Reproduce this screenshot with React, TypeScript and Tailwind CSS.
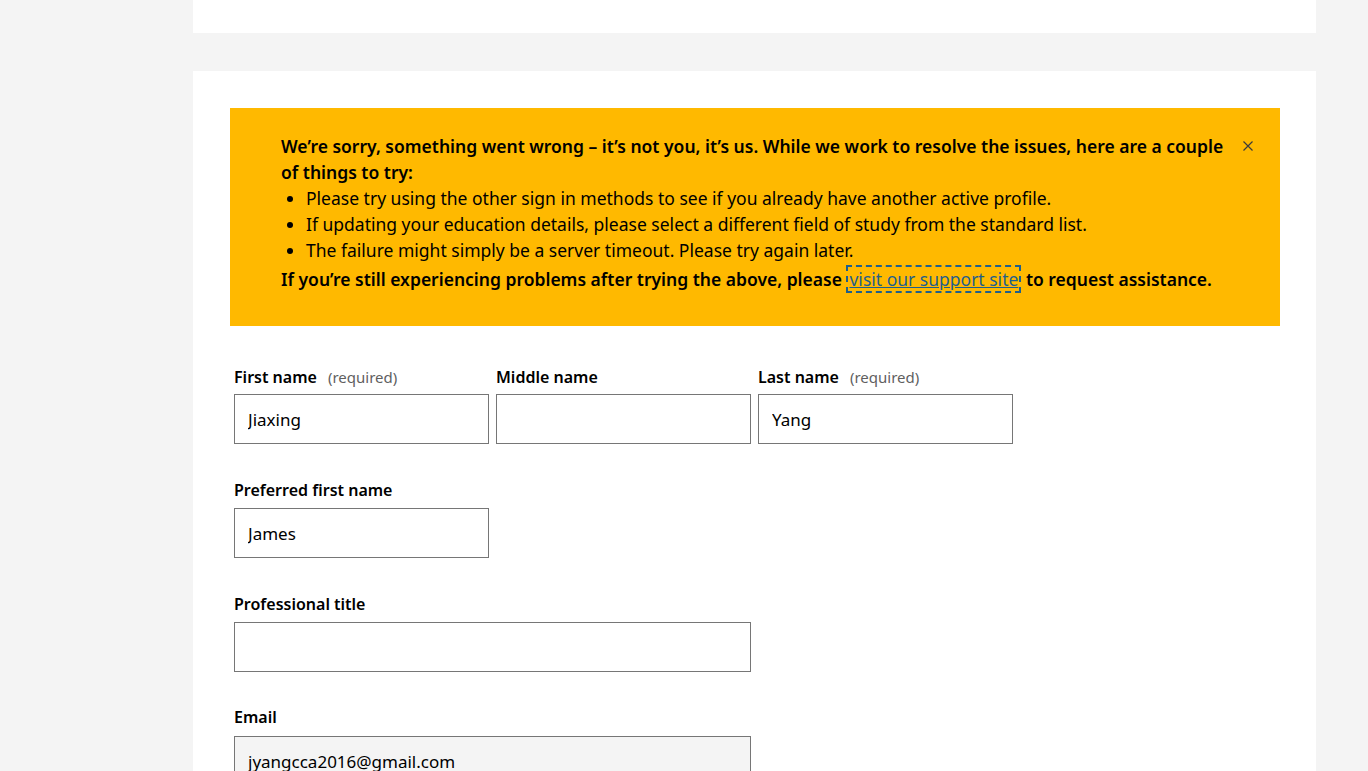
import React from "react"

const font = { fontFamily: '"Noto Sans", "Open Sans", sans-serif' }

const Field = ({
  label,
  required,
  value,
  wide,
  disabled,
  gap = "mb-[6px]",
}: {
  label: string
  required?: boolean
  value?: string
  wide?: boolean
  disabled?: boolean
  gap?: string
}) => (
  <div className={wide ? "w-[517px]" : "w-[255px]"}>
    <label className={`flex items-baseline h-[24px] ${gap} text-[16px] leading-[24px] font-semibold text-black`}>
      {label}
      {required && <span className="ml-[11px] text-[15px] font-normal text-[#5f5f5f]">(required)</span>}
    </label>
    <input
      readOnly
      disabled={disabled}
      defaultValue={value}
      className={`block w-full h-[50px] border border-[#767676] px-[13px] text-[17px] text-black outline-none ${
        disabled ? "bg-[#f4f4f4]" : "bg-white"
      }`}
      style={font}
    />
  </div>
)

export default function App() {
  return (
    <div className="min-h-screen bg-[#f4f4f4]" style={font}>
      <div className="ml-[193px] w-[1123px]">
        <div className="h-[33px] bg-white" />
        <div className="h-[38px]" />
        <div className="bg-white pl-[37px] pr-[36px] pt-[37px] pb-[40px]">
          {/* error banner */}
          <div className="flex bg-[#ffb900] pl-[51px] pr-[26px] pt-[25px] pb-[34px] text-black">
            <div className="flex-1 pr-[14px] text-[17.5px] leading-[26px]">
              <p className="font-semibold">
                We’re sorry, something went wrong – it’s not you, it’s us. While we work to resolve the issues, here are a couple of things to try:
              </p>
              <ul className="list-disc pl-[25px]">
                <li>Please try using the other sign in methods to see if you already have another active profile.</li>
                <li>If updating your education details, please select a different field of study from the standard list.</li>
                <li>The failure might simply be a server timeout. Please try again later.</li>
              </ul>
              <p className="mt-[3px] font-semibold">
                If you’re still experiencing problems after trying the above, please{" "}
                <a
                  href="#"
                  className="mx-[2px] px-[1px] font-normal text-[#1f5f8b] underline outline-2 outline-dashed outline-[#1f5f8b]"
                >
                  visit our support site
                </a>{" "}
                to request assistance.
              </p>
            </div>
            <button className="mt-[6px] h-[14px] w-[12px] text-[#3b3b3b]" aria-label="Close">
              <svg viewBox="0 0 12 12" className="h-[12px] w-[12px]" fill="none" stroke="currentColor" strokeWidth="1.2">
                <path d="M1.5 1.5l9 9M10.5 1.5l-9 9" />
              </svg>
            </button>
          </div>

          {/* form */}
          <div className="pl-[4px] pt-[39px]">
            <div className="flex gap-[7px]">
              <Field label="First name" required value="Jiaxing" gap="mb-[5px]" />
              <Field label="Middle name" gap="mb-[5px]" />
              <Field label="Last name" required value="Yang" gap="mb-[5px]" />
            </div>
            <div className="mt-[34px]">
              <Field label="Preferred first name" value="James" />
            </div>
            <div className="mt-[34px]">
              <Field label="Professional title" wide />
            </div>
            <div className="mt-[33px]">
              <Field label="Email" wide disabled value="jyangcca2016@gmail.com" gap="mb-[7px]" />
            </div>
          </div>
        </div>
      </div>
    </div>
  )
}
